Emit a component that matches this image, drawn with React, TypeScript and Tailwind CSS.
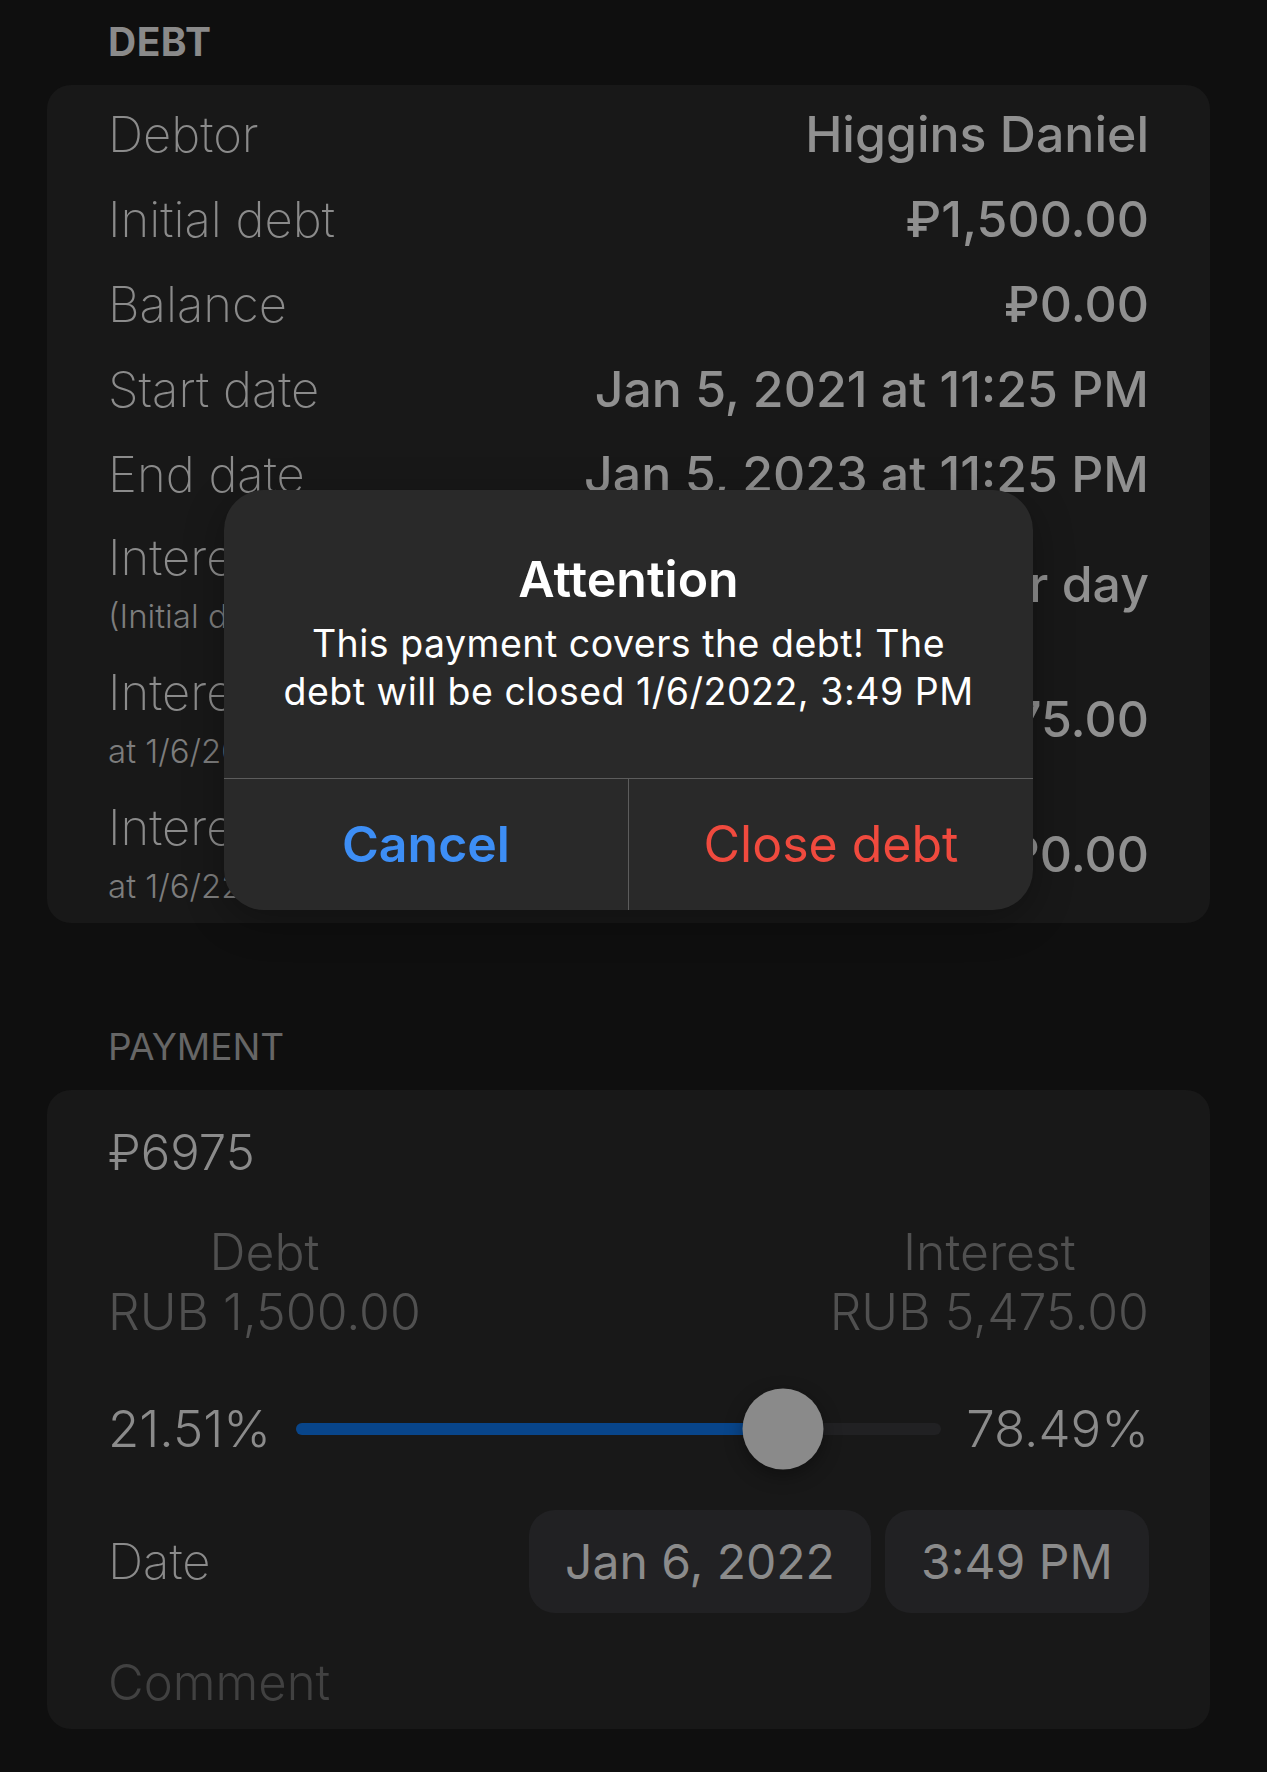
import React from 'react';

const font = { fontFamily: 'Inter, "Noto Sans", sans-serif' };

type Row = { label: string; sub?: string; value: string };

const ROWS: Row[] = [
  { label: 'Debtor', value: 'Higgins Daniel' },
  { label: 'Initial debt', value: '₽1,500.00' },
  { label: 'Balance', value: '₽0.00' },
  { label: 'Start date', value: 'Jan 5, 2021 at 11:25 PM' },
  { label: 'End date', value: 'Jan 5, 2023 at 11:25 PM' },
];

const TALL_ROWS: Row[] = [
  { label: 'Interest rate', sub: '(Initial debt)', value: '1.00% per day' },
  { label: 'Interest', sub: 'at 1/6/2022, 3:49 PM', value: '₽5,475.00' },
  { label: 'Interest paid', sub: 'at 1/6/22, 3:49 PM', value: '₽0.00' },
];

function Slider({ percent }: { percent: number }) {
  return (
    <div className="relative flex-1 h-[12px] rounded-full bg-[#212123]">
      <div className="absolute left-0 top-0 h-full rounded-full bg-[#08458a]" style={{ width: `${percent}%` }} />
      <div
        className="absolute top-1/2 w-[81px] h-[81px] -translate-x-1/2 -translate-y-1/2 rounded-full bg-[#8a8a8a] shadow-[0_6px_18px_rgba(0,0,0,0.35)]"
        style={{ left: `${percent}%` }}
      />
    </div>
  );
}

export default function App() {
  return (
    <div className="relative min-h-[1772px] w-full bg-[#0f0f0f] pl-[47px] pr-[57px]" style={font}>
      {/* Debt section */}
      <div className="pl-[61px] pt-[18px] h-[85px] text-[39px] font-bold leading-[48px] tracking-[0.5px] text-[#8a8a8a]">
        DEBT
      </div>
      <div className="rounded-[24px] bg-[#181818] px-[61px] pt-[7px] pb-[1px]">
        {ROWS.map((r) => (
          <div key={r.label} className="flex h-[85px] items-center justify-between">
            <span className="text-[49px] font-extralight text-[#8b8b8b]">{r.label}</span>
            <span className="text-[50px] font-medium text-[#909090]">{r.value}</span>
          </div>
        ))}
        {TALL_ROWS.map((r) => (
          <div key={r.label} className="flex h-[135px] items-center justify-between">
            <div className="flex flex-col pt-[5px]">
              <span className="text-[49px] font-extralight leading-[58px] text-[#8b8b8b]">{r.label}</span>
              <span className="text-[33px] font-light leading-[58px] text-[#7d7d7d]">{r.sub}</span>
            </div>
            <span className="text-[50px] font-medium text-[#909090]">{r.value}</span>
          </div>
        ))}
      </div>

      {/* Payment section */}
      <div className="pl-[61px] pt-[100px] h-[167px] text-[37px] font-normal leading-[48px] text-[#666666]">
        PAYMENT
      </div>
      <div className="rounded-[24px] bg-[#181818] px-[61px] pt-[34px] pb-[17px]">
        <div className="h-[58px] text-[49px] font-light leading-[58px] text-[#8b8b8b]">₽6975</div>

        <div className="mt-[40px] flex justify-between text-[50px] font-light text-[#505050]">
          <div className="flex flex-col items-center">
            <span className="leading-[60px]">Debt</span>
            <span className="leading-[60px]">RUB 1,500.00</span>
          </div>
          <div className="flex flex-col items-center">
            <span className="leading-[60px]">Interest</span>
            <span className="leading-[60px]">RUB 5,475.00</span>
          </div>
        </div>

        <div className="mt-[42px] flex h-[90px] items-center gap-[25px] text-[51px] font-light text-[#8b8b8b]">
          <span>21.51%</span>
          <Slider percent={75.5} />
          <span>78.49%</span>
        </div>

        <div className="mt-[36px] flex items-center justify-between">
          <span className="text-[49px] font-extralight text-[#8b8b8b]">Date</span>
          <div className="flex gap-[14px]">
            <div className="flex h-[103px] w-[342px] items-center justify-center rounded-[26px] bg-[#212123] text-[48px] font-normal text-[#8b8b8b]">
              Jan 6, 2022
            </div>
            <div className="flex h-[103px] w-[264px] items-center justify-center rounded-[26px] bg-[#212123] text-[48px] font-normal text-[#8b8b8b]">
              3:49 PM
            </div>
          </div>
        </div>

        <div className="mt-[41px] h-[58px] text-[49px] font-light leading-[58px] text-[#414141]">Comment</div>
      </div>

      {/* Alert */}
      <div className="absolute left-[224px] top-[490px] w-[809px] overflow-hidden rounded-[40px] bg-[#292929] shadow-[0_10px_40px_rgba(0,0,0,0.3)]">
        <div className="h-[288px] px-[30px] pt-[59px] text-center">
          <div className="text-[50px] font-semibold leading-[60px] text-white">Attention</div>
          <div className="mt-[11px] text-[37.5px] font-normal leading-[48px] tracking-[0.5px] text-white">
            This payment covers the debt! The
            <br />
            debt will be closed 1/6/2022, 3:49 PM
          </div>
        </div>
        <div className="flex h-[132px] border-t border-[#5c5c5c]">
          <button className="flex-1 border-r border-[#5c5c5c] text-[50px] font-semibold text-[#3d8ef5]">Cancel</button>
          <button className="flex-1 text-[50px] font-normal text-[#f04a3e]">Close debt</button>
        </div>
      </div>
    </div>
  );
}
